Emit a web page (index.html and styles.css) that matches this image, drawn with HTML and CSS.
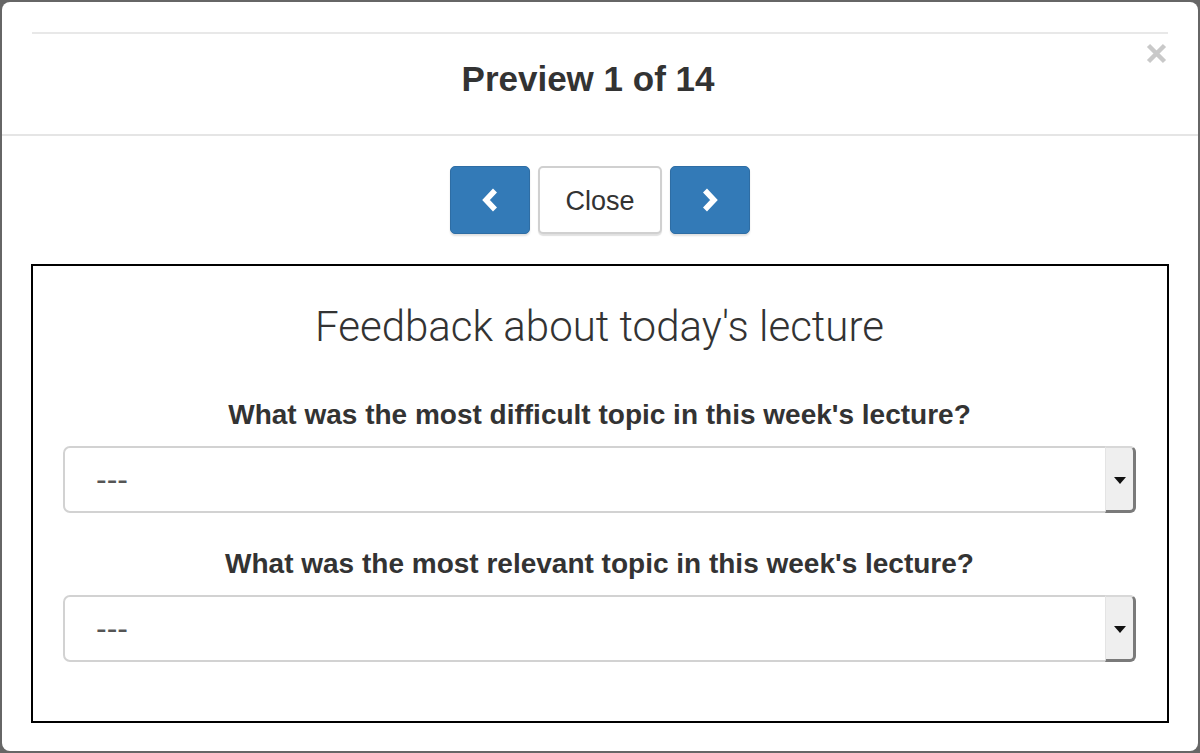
FILE: index.html
```html
<!DOCTYPE html>
<html lang="en">
<head>
<meta charset="utf-8">
<title>Preview</title>
<link rel="stylesheet" href="styles.css">
</head>
<body>
<div class="modal">
  <div class="modal-header">
    <hr class="header-rule">
    <h4 class="modal-title">Preview 1 of 14</h4>
    <button class="close-x" aria-label="Close">
      <svg width="21" height="21" viewBox="0 0 21 21"><path d="M2.5 2.5 L18.5 18.5 M18.5 2.5 L2.5 18.5" stroke="#c9c9c9" stroke-width="4.5" fill="none"/></svg>
    </button>
  </div>
  <div class="modal-body">
    <div class="nav-buttons">
      <button class="btn btn-primary" aria-label="Previous">
        <svg width="18" height="26" viewBox="0 0 18 26"><polyline points="14,3.5 5,13 14,22.5" stroke="#fff" stroke-width="5.5" fill="none"/></svg>
      </button>
      <button class="btn btn-default">Close</button>
      <button class="btn btn-primary" aria-label="Next">
        <svg width="18" height="26" viewBox="0 0 18 26"><polyline points="4,3.5 13,13 4,22.5" stroke="#fff" stroke-width="5.5" fill="none"/></svg>
      </button>
    </div>
    <div class="preview-box">
      <h2 class="survey-title">Feedback about today's lecture</h2>
      <div class="question">
        <label class="q-label">What was the most difficult topic in this week's lecture?</label>
        <div class="select">
          <span class="select-value">---</span>
          <span class="select-arrow"><span class="tri"></span></span>
        </div>
      </div>
      <div class="question">
        <label class="q-label">What was the most relevant topic in this week's lecture?</label>
        <div class="select">
          <span class="select-value">---</span>
          <span class="select-arrow"><span class="tri"></span></span>
        </div>
      </div>
    </div>
  </div>
</div>
</body>
</html>
```

FILE: styles.css
```css
html, body {
  margin: 0;
  padding: 0;
}
body {
  background: #666666;
  height: 753px;
  padding: 2px;
  box-sizing: border-box;
  font-family: "Liberation Sans", Arial, sans-serif;
  color: #333;
  overflow: hidden;
}
.modal {
  position: relative;
  height: 749px;
  width: 1196px;
  background: #fff;
  border-radius: 8px;
  box-sizing: border-box;
}
.modal-header {
  padding-top: 30px;
  border-bottom: 2px solid #e5e5e5;
}
.header-rule {
  margin: 0 30px;
  border: 0;
  border-top: 2px solid #e8e8e8;
  height: 0;
}
.modal-title {
  margin: 0;
  padding: 25px 24px 35px 0;
  font-size: 35px;
  line-height: 40px;
  font-weight: bold;
  text-align: center;
  color: #333;
}
.close-x {
  position: absolute;
  top: 41px;
  right: 31px;
  padding: 0;
  margin: 0;
  border: 0;
  background: transparent;
  width: 21px;
  height: 21px;
  display: block;
}
.close-x svg { display: block; }
.modal-body {
  padding: 30px 29px 29px;
}
.nav-buttons {
  display: flex;
  justify-content: center;
  gap: 8px;
  margin-bottom: 30px;
}
.btn {
  height: 68px;
  box-sizing: border-box;
  border-radius: 5px;
  font-family: "Liberation Sans", Arial, sans-serif;
  font-size: 27px;
  display: flex;
  align-items: center;
  justify-content: center;
  padding: 0;
  margin: 0;
}
.btn svg { display: block; }
.btn-primary {
  width: 80px;
  background: #337ab7;
  border: 1px solid #2e6da4;
  box-shadow: 0 2px 2px rgba(0,0,0,0.12);
}
.btn-default {
  width: 124px;
  padding-top: 3px;
  background: #fff;
  color: #333;
  border: 2px solid #d0d0d0;
  box-shadow: 0 2px 1px rgba(0,0,0,0.12);
}
.preview-box {
  border: 2px solid #000;
  height: 459px;
  box-sizing: border-box;
  padding: 0 31px 0 30px;
}
.survey-title {
  margin: 0;
  padding-top: 39px;
  height: 82px;
  box-sizing: border-box;
  font-family: "Roboto", "Liberation Sans", sans-serif;
  font-weight: 300;
  font-size: 42px;
  line-height: 44px;
  text-align: center;
  color: #333;
}
.question {
  margin-top: 51px;
}
.question + .question {
  margin-top: 35px;
}
.q-label {
  display: block;
  text-align: center;
  font-weight: bold;
  font-size: 28px;
  line-height: 32px;
  color: #333;
  margin-bottom: 15px;
}
.select {
  display: flex;
  height: 67px;
  box-sizing: border-box;
  border: 2px solid #d2d2d2;
  border-radius: 7px;
  background: #fff;
}
.select-value {
  flex: 1;
  display: flex;
  align-items: center;
  padding-left: 31px;
  font-size: 32px;
  color: #555;
}
.select-arrow {
  width: 31px;
  margin: -2px -2px -2px 0;
  background: #efefef;
  border-top: 2px solid #d8d8d8;
  border-left: 1px solid #e4e4e4;
  border-right: 3px solid #7a7a7a;
  border-bottom: 3px solid #7a7a7a;
  border-top-right-radius: 6px;
  border-bottom-right-radius: 6px;
  box-sizing: border-box;
  display: flex;
  align-items: center;
  justify-content: center;
}
.tri {
  width: 0;
  height: 0;
  border-left: 6px solid transparent;
  border-right: 6px solid transparent;
  border-top: 7px solid #111;
  margin-top: 2px;
}
```
